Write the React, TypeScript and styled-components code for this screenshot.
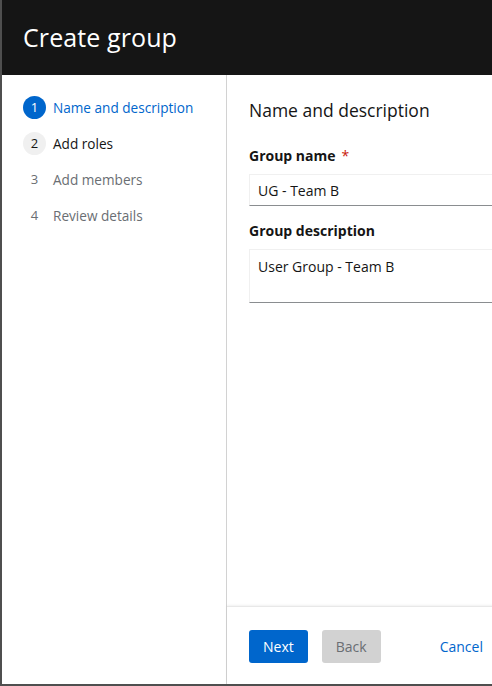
import styled, { createGlobalStyle } from "styled-components";

const GlobalStyle = createGlobalStyle`
  html, body {
    margin: 0;
    padding: 0;
    overflow: hidden;
    background: #4f4f4f;
  }
  * {
    box-sizing: border-box;
  }
`;

const COLOR = {
  dark: "#151515",
  blue: "#0066cc",
  gray: "#6a6e73",
  border: "#d2d2d2",
  light: "#f0f0f0",
  danger: "#c9190b",
};

const FONT = `"Open Sans", "Liberation Sans", sans-serif`;

const Backdrop = styled.div`
  width: 492px;
  height: 686px;
  overflow: hidden;
  padding: 0 0 2px 2px;
  background: #4f4f4f;
  font-family: ${FONT};
`;

const Modal = styled.div`
  width: 760px;
  height: 684px;
  background: #fff;
  display: flex;
  flex-direction: column;
`;

const Header = styled.header`
  height: 75px;
  flex: none;
  background: ${COLOR.dark};
  display: flex;
  align-items: center;
  padding: 0 21px;
`;

const Title = styled.h1`
  margin: 0 0 2px;
  font-weight: 400;
  font-size: 25px;
  letter-spacing: 0.1px;
  color: #fff;
`;

const Body = styled.div`
  flex: 1;
  display: flex;
  min-height: 0;
`;

const Nav = styled.nav`
  width: 225px;
  flex: none;
  border-right: 1px solid ${COLOR.border};
  padding: 21px 0 0 21px;
  display: flex;
  flex-direction: column;
  gap: 14px;
`;

type StepState = "current" | "next" | "disabled";

const Step = styled.div<{ $state: StepState }>`
  display: flex;
  align-items: center;
  gap: 7px;
  height: 22px;
  font-size: 13.6px;
  color: ${({ $state }) =>
    $state === "current" ? COLOR.blue : $state === "next" ? COLOR.dark : COLOR.gray};
`;

const StepNum = styled.span<{ $state: StepState }>`
  width: 23px;
  height: 23px;
  border-radius: 50%;
  display: flex;
  align-items: center;
  justify-content: center;
  font-size: 13px;
  background: ${({ $state }) =>
    $state === "current" ? COLOR.blue : $state === "next" ? COLOR.light : "transparent"};
  color: ${({ $state }) =>
    $state === "current" ? "#fff" : $state === "next" ? COLOR.dark : COLOR.gray};
`;

const Main = styled.div`
  flex: 1;
  display: flex;
  flex-direction: column;
`;

const Content = styled.div`
  flex: 1;
  padding: 22px 22px 0;
`;

const Heading = styled.h2`
  margin: 0 0 22px;
  font-weight: 500;
  font-size: 17.5px;
  line-height: 26px;
  color: ${COLOR.dark};
`;

const Field = styled.div`
  display: flex;
  flex-direction: column;
  gap: 8px;
  margin-bottom: 14px;
`;

const Label = styled.label`
  font-size: 14px;
  font-weight: 700;
  line-height: 21px;
  color: ${COLOR.dark};
`;

const Required = styled.span`
  color: ${COLOR.danger};
  margin-left: 6px;
  font-weight: 400;
`;

const Input = styled.input`
  height: 32px;
  width: 100%;
  padding: 0 8px;
  border: 1px solid ${COLOR.light};
  border-bottom-color: #8a8d90;
  font-family: ${FONT};
  font-size: 14px;
  color: ${COLOR.dark};
  outline: none;
`;

const TextArea = styled.textarea`
  height: 54px;
  width: 100%;
  padding: 6px 8px;
  border: 1px solid ${COLOR.light};
  border-bottom-color: #8a8d90;
  font-family: ${FONT};
  font-size: 14px;
  line-height: 21px;
  color: ${COLOR.dark};
  resize: none;
  outline: none;
`;

const Footer = styled.footer`
  flex: none;
  height: 78px;
  border-top: 1px solid #e8e8e8;
  box-shadow: 0 -1px 2px rgba(3, 3, 3, 0.06);
  display: flex;
  align-items: center;
  padding: 2px 22px 0;
  gap: 14px;
`;

const Button = styled.button<{ $variant: "primary" | "secondary" | "link" }>`
  height: 33px;
  padding: 0 14px;
  border: none;
  border-radius: 3px;
  font-family: ${FONT};
  font-size: 14px;
  cursor: pointer;
  background: ${({ $variant }) =>
    $variant === "primary" ? COLOR.blue : $variant === "secondary" ? COLOR.border : "transparent"};
  color: ${({ $variant }) =>
    $variant === "primary" ? "#fff" : $variant === "secondary" ? COLOR.gray : COLOR.blue};
  margin-left: ${({ $variant }) => ($variant === "link" ? "31px" : "0")};
`;

const steps: { label: string; state: StepState }[] = [
  { label: "Name and description", state: "current" },
  { label: "Add roles", state: "next" },
  { label: "Add members", state: "disabled" },
  { label: "Review details", state: "disabled" },
];

export default function App() {
  return (
    <Backdrop>
      <GlobalStyle />
      <Modal>
        <Header>
          <Title>Create group</Title>
        </Header>
        <Body>
          <Nav>
            {steps.map((s, i) => (
              <Step key={s.label} $state={s.state}>
                <StepNum $state={s.state}>{i + 1}</StepNum>
                {s.label}
              </Step>
            ))}
          </Nav>
          <Main>
            <Content>
              <Heading>Name and description</Heading>
              <Field>
                <Label>
                  Group name<Required>*</Required>
                </Label>
                <Input defaultValue="UG - Team B" />
              </Field>
              <Field>
                <Label>Group description</Label>
                <TextArea defaultValue="User Group - Team B" />
              </Field>
            </Content>
            <Footer>
              <Button $variant="primary">Next</Button>
              <Button $variant="secondary">Back</Button>
              <Button $variant="link">Cancel</Button>
            </Footer>
          </Main>
        </Body>
      </Modal>
    </Backdrop>
  );
}
